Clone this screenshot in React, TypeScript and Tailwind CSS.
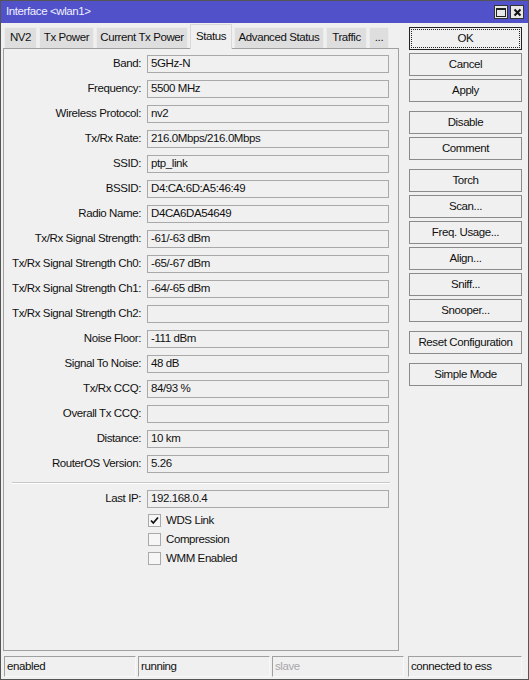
import React from "react";

const rows: [string, string][] = [
  ["Band:", "5GHz-N"],
  ["Frequency:", "5500 MHz"],
  ["Wireless Protocol:", "nv2"],
  ["Tx/Rx Rate:", "216.0Mbps/216.0Mbps"],
  ["SSID:", "ptp_link"],
  ["BSSID:", "D4:CA:6D:A5:46:49"],
  ["Radio Name:", "D4CA6DA54649"],
  ["Tx/Rx Signal Strength:", "-61/-63 dBm"],
  ["Tx/Rx Signal Strength Ch0:", "-65/-67 dBm"],
  ["Tx/Rx Signal Strength Ch1:", "-64/-65 dBm"],
  ["Tx/Rx Signal Strength Ch2:", ""],
  ["Noise Floor:", "-111 dBm"],
  ["Signal To Noise:", "48 dB"],
  ["Tx/Rx CCQ:", "84/93 %"],
  ["Overall Tx CCQ:", ""],
  ["Distance:", "10 km"],
  ["RouterOS Version:", "5.26"],
];

const tabs: [string, string][] = [
  ["NV2", "w-[33px]"],
  ["Tx Power", "w-[55px]"],
  ["Current Tx Power", "w-[92px]"],
  ["Status", "w-[42px]"],
  ["Advanced Status", "w-[90px]"],
  ["Traffic", "w-[41px]"],
  ["...", "w-[20px]"],
];

const buttonGroups = [
  ["OK", "Cancel", "Apply"],
  ["Disable", "Comment"],
  ["Torch", "Scan...", "Freq. Usage...", "Align...", "Sniff...", "Snooper..."],
  ["Reset Configuration"],
  ["Simple Mode"],
];

function Row({ label, value }: { label: string; value: string }) {
  return (
    <div className="flex items-center h-[18px]">
      <div className="w-[137px] text-right whitespace-nowrap">{label}</div>
      <div className="ml-[6px] w-[242px] h-[18px] border border-[#a9a9a9] bg-[#f0f0f0] flex items-center px-[3px] whitespace-nowrap">
        {value}
      </div>
    </div>
  );
}

function Check({ label, checked }: { label: string; checked?: boolean }) {
  return (
    <div className="flex items-center h-[13px] ml-[144px]">
      <div className="w-[13px] h-[13px] border border-[#a9a9a9] bg-[#f6f6f6] flex items-center justify-center">
        {checked && (
          <svg width="9" height="9" viewBox="0 0 9 9">
            <path d="M1 4.5 L3.3 7 L8 1.5" stroke="#111" strokeWidth="1.8" fill="none" />
          </svg>
        )}
      </div>
      <span className="ml-[5px]">{label}</span>
    </div>
  );
}

export default function App() {
  return (
    <div
      className="w-[529px] h-[680px] bg-[#f0f0f0] border border-[#555] text-[11.5px] tracking-[-0.4px] text-[#111] leading-none flex flex-col overflow-hidden"
      style={{ fontFamily: "'Liberation Sans', Arial, sans-serif" }}
    >
      {/* Title bar */}
      <div className="h-[22px] bg-[#5151c9] flex items-center justify-between pl-[5px] pr-[4px] shrink-0">
        <span className="text-[#f0f0ff]">Interface &lt;wlan1&gt;</span>
        <div className="flex gap-[2px]">
          <div className="w-[14px] h-[14px] bg-[#e8e8e8] border border-[#333] flex items-center justify-center">
            <div className="w-[10px] h-[9px] border border-[#222] border-t-2"></div>
          </div>
          <div className="w-[14px] h-[14px] bg-[#e8e8e8] border border-[#333] flex items-center justify-center">
            <svg width="9" height="9" viewBox="0 0 9 9">
              <path d="M1.5 1.5 L7.5 7.5 M7.5 1.5 L1.5 7.5" stroke="#111" strokeWidth="2" />
            </svg>
          </div>
        </div>
      </div>

      {/* Body */}
      <div className="flex px-[2px] flex-1">
        {/* Left column */}
        <div className="w-[396px] flex flex-col">
          <div className="h-[25px] flex items-end pl-[1px] gap-[2px] relative z-10">
            {tabs.map(([t, w]) =>
              t === "Status" ? (
                <div
                  key={t}
                  className={`${w} h-[25px] flex items-center justify-center whitespace-nowrap bg-[#f0f0f0] border border-b-0 border-[#d9d9d9] -mb-[1px]`}
                >
                  {t}
                </div>
              ) : (
                <div
                  key={t}
                  className={`${w} h-[21px] flex items-center justify-center whitespace-nowrap bg-[#dedede] border border-b-0 border-[#ececec]`}
                >
                  {t}
                </div>
              )
            )}
          </div>
          <div className="h-[603px] border border-[#a0a0a0] pt-[6px] flex flex-col">
            <div className="flex flex-col gap-[7px]">
              {rows.map(([l, v]) => (
                <Row key={l} label={l} value={v} />
              ))}
            </div>
            <div className="mt-[9px] ml-[8px] w-[378px] h-[2px] border-t border-[#c8c8c8] border-b border-b-white"></div>
            <div className="mt-[6px]">
              <Row label="Last IP:" value="192.168.0.4" />
            </div>
            <div className="mt-[6px] flex flex-col gap-[6px]">
              <Check label="WDS Link" checked />
              <Check label="Compression" />
              <Check label="WMM Enabled" />
            </div>
          </div>
        </div>

        {/* Right column */}
        <div className="ml-[10px] w-[113px] pt-[4px] flex flex-col gap-[9px]">
          {buttonGroups.map((g, gi) => (
            <div key={gi} className="flex flex-col gap-[3px]">
              {g.map((b) =>
                b === "OK" ? (
                  <div key={b} className="h-[23px] border border-[#222] bg-[#f0f0f0] flex p-[1px]">
                    <div className="flex-1 border border-dotted border-[#222] flex items-center justify-center">
                      {b}
                    </div>
                  </div>
                ) : (
                  <div
                    key={b}
                    className="h-[23px] border border-[#8a8a8a] bg-[#f0f0f0] flex items-center justify-center whitespace-nowrap"
                  >
                    {b}
                  </div>
                )
              )}
            </div>
          ))}
        </div>
      </div>

      {/* Status bar */}
      <div className="h-[26px] flex items-start pt-[3px] pl-[3px] gap-[2px] shrink-0">
        {[
          ["enabled", ""],
          ["running", ""],
          ["slave", "text-[#a8a8a8]"],
        ].map(([t, c]) => (
          <div
            key={t}
            className={`w-[132px] h-[21px] border-t border-l border-[#a0a0a0] border-r border-b border-r-[#f8f8f8] border-b-[#f8f8f8] flex items-center px-[2px] ${c}`}
          >
            {t}
          </div>
        ))}
        <div className="ml-[2px] w-[114px] h-[21px] border-t border-l border-[#a0a0a0] border-r border-b border-r-[#f8f8f8] border-b-[#f8f8f8] flex items-center px-[2px]">
          connected to ess
        </div>
      </div>
    </div>
  );
}
